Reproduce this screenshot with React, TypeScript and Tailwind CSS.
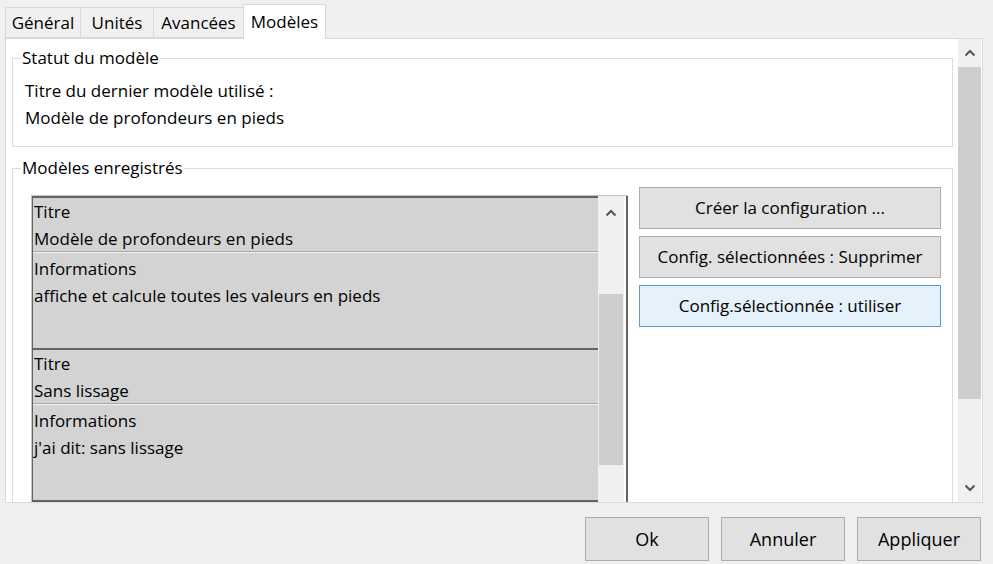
import React from "react";

const font = { fontFamily: '"Segoe UI", "Open Sans", "Noto Sans", sans-serif' };

function Chevron({ down = false }: { down?: boolean }) {
  return (
    <svg width="12" height="8" viewBox="0 0 12 8" className="block">
      <polyline
        points={down ? "1.5,1.5 6,6 10.5,1.5" : "1.5,6.5 6,2 10.5,6.5"}
        fill="none"
        stroke="#555"
        strokeWidth="2"
      />
    </svg>
  );
}

function Tab({ label, active = false, w }: { label: string; active?: boolean; w: string }) {
  if (active) {
    return (
      <div className={`${w} h-[35px] bg-white border border-b-0 border-[#d9d9d9] flex items-center justify-center -mb-px relative z-10`}>
        {label}
      </div>
    );
  }
  return (
    <div className={`${w} h-[31px] bg-[#f0f0f0] border border-r-0 border-[#d9d9d9] flex items-center justify-center`}>
      {label}
    </div>
  );
}

function Item({ title, info }: { title: string; info: string }) {
  return (
    <div className="border-b-2 border-[#646464]">
      <div className="h-[54px] leading-[27px] pl-[1px] border-b border-[#a5a5a5]">
        <div>Titre</div>
        <div>{title}</div>
      </div>
      <div className="h-[96px] leading-[27px] pl-[1px] pt-[2px] border-t border-[#f4f4f4]">
        <div>Informations</div>
        <div>{info}</div>
      </div>
    </div>
  );
}

function SideButton({ label, primary = false }: { label: string; primary?: boolean }) {
  return (
    <button
      className={
        primary
          ? "h-[42px] w-[302px] bg-[#e5f1fb] border border-[#5b9bd5] text-[17px]"
          : "h-[42px] w-[302px] bg-[#e1e1e1] border border-[#adadad] text-[17px]"
      }
    >
      {label}
    </button>
  );
}

function DialogButton({ label }: { label: string }) {
  return (
    <button className="h-[44px] w-[124px] bg-[#e1e1e1] border border-[#adadad] text-[18px]">
      {label}
    </button>
  );
}

export default function App() {
  return (
    <div className="w-[993px] h-[564px] bg-[#f0f0f0] overflow-hidden text-[17px] text-[#000]" style={font}>
      {/* tabs */}
      <div className="flex items-end h-[38px] pl-[5px] pt-[3px]">
        <Tab label="Général" w="w-[75px]" />
        <Tab label="Unités" w="w-[73px]" />
        <Tab label="Avancées" w="w-[90px]" />
        <Tab label="Modèles" active w="w-[83px]" />
      </div>

      {/* tab panel */}
      <div className="ml-[5px] w-[978px] h-[465px] bg-white border border-[#d9d9d9] flex">
        <div className="flex-1 overflow-hidden pl-[6px]">
          <fieldset className="mt-[8px] w-[941px] h-[100px] border border-[#dcdcdc]">
            <legend className="ml-[8px] px-[1px] leading-[22px]">Statut du modèle</legend>
            <div className="pt-[8px] pl-[12px] leading-[27px]">
              <div>Titre du dernier modèle utilisé :</div>
              <div>Modèle de profondeurs en pieds</div>
            </div>
          </fieldset>

          <fieldset className="mt-[10px] w-[941px] h-[400px] border border-[#dcdcdc]">
            <legend className="ml-[8px] px-[1px] leading-[22px]">Modèles enregistrés</legend>
            <div className="flex items-start gap-[11px] pt-[8px] pl-[18px]">
              {/* list */}
              <div className="mt-[8px] w-[597px] h-[320px] flex border-t border-l border-[#c4c4c4]">
                <div className="w-[566px] bg-[#d3d3d3] border-t-2 border-l border-[#646464]">
                  <Item title="Modèle de profondeurs en pieds" info="affiche et calcule toutes les valeurs en pieds" />
                  <Item title="Sans lissage" info="j'ai dit: sans lissage" />
                </div>
                <div className="w-[26px] bg-[#f0f0f0] flex flex-col items-center">
                  <div className="h-[30px] flex items-center justify-center pt-[4px]">
                    <Chevron />
                  </div>
                  <div className="mt-[68px] w-[24px] h-[171px] bg-[#cdcdcd]" />
                </div>
                <div className="w-[2px] bg-white" />
                <div className="w-[2px] bg-[#646464]" />
              </div>

              {/* actions */}
              <div className="flex flex-col gap-[7px]">
                <SideButton label="Créer la configuration ..." />
                <SideButton label="Config. sélectionnées : Supprimer" />
                <SideButton label="Config.sélectionnée : utiliser" primary />
              </div>
            </div>
          </fieldset>
        </div>

        {/* panel scrollbar */}
        <div className="w-[23px] mr-px bg-[#f0f0f0] flex flex-col">
          <div className="h-[28px] flex items-center justify-center">
            <Chevron />
          </div>
          <div className="h-[332px] bg-[#cdcdcd]" />
          <div className="flex-1" />
          <div className="h-[28px] flex items-center justify-center">
            <Chevron down />
          </div>
        </div>
      </div>

      {/* dialog buttons */}
      <div className="flex justify-end gap-[12px] pr-[12px] pt-[14px]">
        <DialogButton label="Ok" />
        <DialogButton label="Annuler" />
        <DialogButton label="Appliquer" />
      </div>
    </div>
  );
}
